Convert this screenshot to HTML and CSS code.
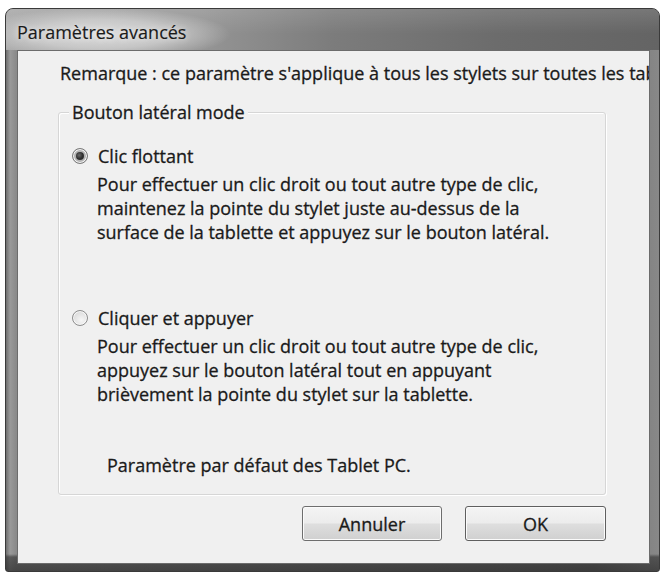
FILE: index.html
```html
<!DOCTYPE html>
<html lang="fr">
<head>
<meta charset="utf-8">
<title>Paramètres avancés</title>
<link rel="stylesheet" href="styles.css">
</head>
<body>
<div class="window">
  <div class="titlebar"><span class="title">Paramètres avancés</span></div>
  <div class="client">
    <p class="note">Remarque : ce paramètre s'applique à tous les stylets sur toutes les tablettes.</p>
    <div class="group">
      <span class="legend">Bouton latéral mode</span>
      <div class="option">
        <div class="radio-row"><span class="radio checked"></span><span>Clic flottant</span></div>
        <p class="desc">Pour effectuer un clic droit ou tout autre type de clic,<br>maintenez la pointe du stylet juste au-dessus de la<br>surface de la tablette et appuyez sur le bouton latéral.</p>
      </div>
      <div class="option second">
        <div class="radio-row"><span class="radio"></span><span>Cliquer et appuyer</span></div>
        <p class="desc">Pour effectuer un clic droit ou tout autre type de clic,<br>appuyez sur le bouton latéral tout en appuyant<br>brièvement la pointe du stylet sur la tablette.</p>
      </div>
      <p class="default">Paramètre par défaut des Tablet PC.</p>
    </div>
    <div class="buttons">
      <button class="btn cancel">Annuler</button>
      <button class="btn ok">OK</button>
    </div>
  </div>
</div>
</body>
</html>
```
FILE: styles.css
```css
html, body {
  margin: 0;
  background: #ffffff;
}
body {
  font-family: "Open Sans", Lato, "DejaVu Sans", sans-serif;
  font-size: 18px;
  font-weight: 400;
  color: #1a1a1a;
  -webkit-text-stroke: 0.3px #1a1a1a;
}
.window {
  margin: 8px 0 0 5px;
  width: 655px;
  height: 564px;
  box-sizing: border-box;
  border: 1px solid #3a3a3a;
  border-radius: 8px 8px 3px 3px;
  padding: 0 9px 7px 11px;
  display: flex;
  flex-direction: column;
  background:
    linear-gradient(to bottom, rgba(255,255,255,0) 0, rgba(255,255,255,0) 545px, rgba(40,40,40,0.55) 548px, rgba(40,40,40,0.7) 100%),
    linear-gradient(to right, #6f6f6f 0, #9a9a9a 4px, #8a8a8a 10px, #7a7a7a 40%, #6a6a6a 90%, #888 100%);
}
.titlebar {
  height: 41px;
  margin: 0 -9px 0 -11px;
  padding: 5px 0 0 11px;
  box-sizing: border-box;
  display: flex;
  align-items: center;
  border-radius: 7px 7px 0 0;
  background:
    radial-gradient(ellipse 130px 26px at 95px 25px, rgba(225,225,225,0.95) 0, rgba(215,215,215,0.7) 55%, rgba(215,215,215,0) 100%),
    linear-gradient(to bottom, rgba(255,255,255,0.12), rgba(0,0,0,0) 60%),
    linear-gradient(to right, #a8a8a8 0, #959595 30%, #7c7c7c 50%, #6c6c6c 75%, #646464 100%);
}
.title {
  font-size: 18px;
  font-weight: 400;
  color: #1a1a1a;
  -webkit-text-stroke: 0.15px #1a1a1a;
  text-shadow: 0 0 6px rgba(255,255,255,0.8);
}
.client {
  flex: 1;
  background: #f0f0f0;
  border: 1px solid #6c6c6c;
  overflow: hidden;
  display: flex;
  flex-direction: column;
}
.note {
  margin: 10px 0 0 42px;
  line-height: 24px;
  white-space: nowrap;
}
.group {
  position: relative;
  margin: 27px 43px 0 40px;
  height: 383px;
  box-sizing: border-box;
  border: 1px solid #d6d6d6;
  border-radius: 3px;
  box-shadow: inset 1px 1px 0 #ffffff, 1px 1px 0 #ffffff;
  padding: 31px 0 0 13px;
}
.legend {
  position: absolute;
  top: -13px;
  left: 10px;
  padding: 0 3px;
  line-height: 24px;
  background: #f0f0f0;
  white-space: nowrap;
}
.radio-row {
  display: flex;
  align-items: center;
  gap: 10px;
  height: 24px;
  line-height: 24px;
}
.radio {
  position: relative;
  width: 16px;
  height: 16px;
  box-sizing: border-box;
  border-radius: 50%;
  border: 1px solid #8d8d8d;
  background: radial-gradient(circle at 60% 65%, #f6f6f6 0, #e2e2e2 55%, #c9c9c9 100%);
  box-shadow: inset 0 0 0 1px #f8f8f8;
  flex: none;
}
.radio.checked {
  border-color: #7a7a7a;
  background: radial-gradient(circle at 50% 50%, #bdbdbd 0, #a9a9a9 100%);
}
.radio.checked::after {
  content: "";
  position: absolute;
  inset: 3px;
  border-radius: 50%;
  background: radial-gradient(circle at 40% 40%, #6a6a6a 0, #2c2c2c 55%, #3a3a3a 100%);
}
.desc {
  margin: 4px 0 0 25px;
  line-height: 24px;
  white-space: nowrap;
}
.option.second {
  margin-top: 62px;
}
.default {
  margin: 47px 0 0 35px;
  line-height: 24px;
}
.buttons {
  display: flex;
  justify-content: flex-end;
  gap: 23px;
  margin: 11px 43px 0 0;
}
.btn {
  height: 35px;
  width: 140px;
  box-sizing: border-box;
  border: 1px solid #6e6e6e;
  border-radius: 3px;
  background: linear-gradient(to bottom, #f4f4f4 0, #ececec 48%, #dedede 52%, #d0d0d0 100%);
  box-shadow: inset 0 0 0 1px #fbfbfb;
  font-family: inherit;
  font-size: 18px;
  font-weight: 400;
  color: #1a1a1a;
  -webkit-text-stroke: 0.3px #1a1a1a;
  padding: 0;
}
.btn.ok {
  width: 141px;
  border-color: #5f5f5f;
}
```
